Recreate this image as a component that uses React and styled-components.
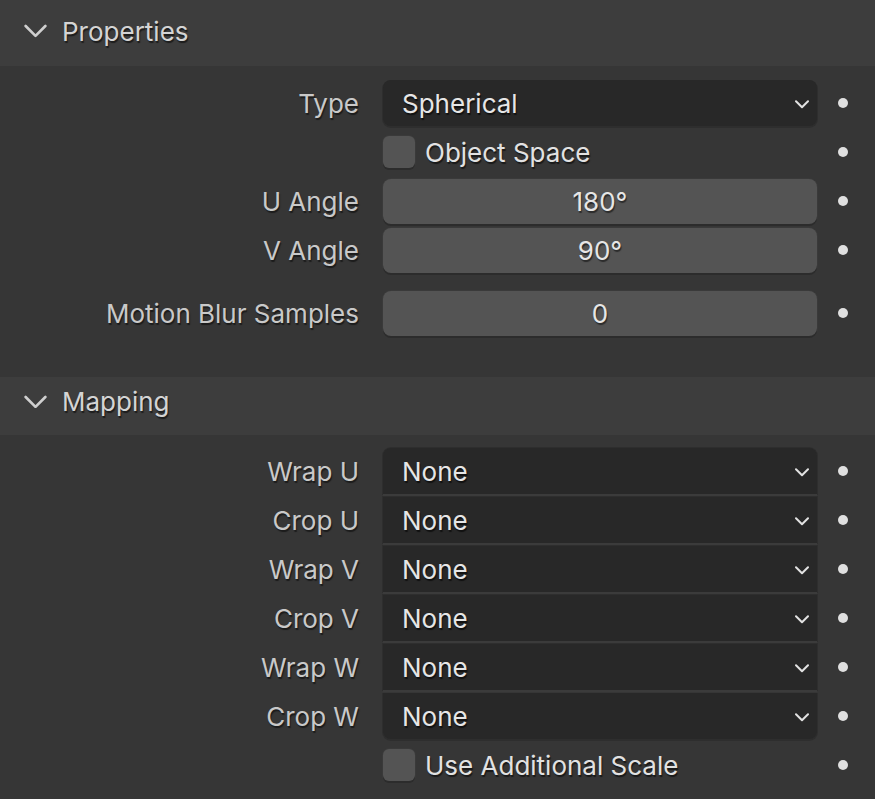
import React from "react";
import styled, { createGlobalStyle } from "styled-components";

const GlobalStyle = createGlobalStyle`
	html, body {
		margin: 0;
		padding: 0;
		background: #363636;
	}
	body {
		font-family: Inter, "Noto Sans", "DejaVu Sans", sans-serif;
		font-size: 26px;
		color: #e6e6e6;
	}
`;

const properties = [
	{ label: "Type", kind: "select", value: "Spherical" },
	{ kind: "check", value: "Object Space" },
	{ label: "U Angle", kind: "number", value: "180°" },
	{ label: "V Angle", kind: "number", value: "90°" },
	{ label: "Motion Blur Samples", kind: "number", value: "0", spaced: true },
];

const mapping = ["Wrap U", "Crop U", "Wrap V", "Crop V", "Wrap W", "Crop W"];

function Chevron({ size = 14, stroke = "#e2e2e2", width = 2 }) {
	return (
		<svg width={size} height={size * 0.6} viewBox="0 0 14 8" fill="none">
			<path
				d="M1 1 L7 7 L13 1"
				stroke={stroke}
				strokeWidth={width}
				strokeLinecap="round"
				strokeLinejoin="round"
			/>
		</svg>
	);
}

function Row({ label, spaced, children }) {
	return (
		<RowGrid $spaced={spaced}>
			<Label>{label}</Label>
			{children}
			<DotCell>
				<Dot />
			</DotCell>
		</RowGrid>
	);
}

export default function App() {
	return (
		<>
			<GlobalStyle />
			<Panel>
				<Header $height={66} $pad={4}>
					<Chevron size={23} stroke="#cfcfcf" width={1.6} />
					<HeaderTitle>Properties</HeaderTitle>
				</Header>
				<Body $top={14} $bottom={41}>
					{properties.map((p, i) => {
						if (p.kind === "check") {
							return (
								<Row key={i}>
									<CheckWrap>
										<CheckBox />
										<CheckText>{p.value}</CheckText>
									</CheckWrap>
								</Row>
							);
						}
						if (p.kind === "select") {
							return (
								<Row key={i} label={p.label}>
									<Select $pos="single">
										<span>{p.value}</span>
										<Chevron />
									</Select>
								</Row>
							);
						}
						return (
							<Row key={i} label={p.label} spaced={p.spaced}>
								<NumberField>{p.value}</NumberField>
							</Row>
						);
					})}
				</Body>
			</Panel>
			<Panel>
				<Header $height={58} $pad={9}>
					<Chevron size={23} stroke="#cfcfcf" width={1.6} />
					<HeaderTitle>Mapping</HeaderTitle>
				</Header>
				<Body $top={13} $bottom={12}>
					{mapping.map((m, i) => (
						<Row key={m} label={m}>
							<Select
								$pos={i === 0 ? "first" : i === mapping.length - 1 ? "last" : "middle"}
							>
								<span>None</span>
								<Chevron />
							</Select>
						</Row>
					))}
					<Row>
						<CheckWrap>
							<CheckBox />
							<CheckText>Use Additional Scale</CheckText>
						</CheckWrap>
					</Row>
				</Body>
			</Panel>
		</>
	);
}

const Panel = styled.section`
	display: flex;
	flex-direction: column;
`;

const Header = styled.header`
	height: ${(p) => p.$height}px;
	background: #3d3d3d;
	display: flex;
	align-items: center;
	gap: 15px;
	padding: 0 0 ${(p) => p.$pad}px 24px;
	box-sizing: border-box;
`;

const HeaderTitle = styled.h2`
	margin: 0;
	font-size: 26px;
	font-weight: 400;
	color: #d4d4d4;
	text-shadow: 1px 2px 1px rgba(0, 0, 0, 0.55);
`;

const Body = styled.div`
	background: #363636;
	padding: ${(p) => p.$top}px 0 ${(p) => p.$bottom}px;
	display: flex;
	flex-direction: column;
	gap: 3px;
`;

const RowGrid = styled.div`
	display: grid;
	grid-template-columns: 383px 434px 52px;
	height: 46px;
	align-items: center;
	margin-top: ${(p) => (p.$spaced ? 14 : 0)}px;
`;

const Label = styled.span`
	padding-right: 24px;
	text-align: right;
	color: #c9c9c9;
	text-shadow: 1px 2px 1px rgba(0, 0, 0, 0.5);
	white-space: nowrap;
`;

const radiusFor = {
	single: "8px",
	first: "8px 8px 0 0",
	middle: "0",
	last: "0 0 8px 8px",
};

const Select = styled.div`
	height: 46px;
	box-sizing: border-box;
	background: #282828;
	border-radius: ${(p) => radiusFor[p.$pos]};
	display: flex;
	align-items: center;
	justify-content: space-between;
	padding: 0 8px 0 19px;
	color: #e6e6e6;
	text-shadow: 1px 2px 1px rgba(0, 0, 0, 0.6);
	box-shadow: ${(p) =>
		p.$pos === "first" || p.$pos === "middle"
			? "0 2px 0 #3b3b3b, 0 0 0 1px #2e2e2e"
			: "0 1px 0 1px #2e2e2e"};

	svg {
		margin-top: 3px;
	}
`;

const NumberField = styled.div`
	height: 45px;
	box-sizing: border-box;
	background: #545454;
	border-radius: 8px;
	display: flex;
	align-items: center;
	justify-content: center;
	color: #e6e6e6;
	text-shadow: 1px 2px 1px rgba(0, 0, 0, 0.5);
	box-shadow: 0 2px 0 #2c2c2c, 0 0 0 1px #3a3a3a;
`;

const CheckWrap = styled.label`
	display: flex;
	align-items: center;
	gap: 10px;
	color: #e2e2e2;
	text-shadow: 1px 2px 1px rgba(0, 0, 0, 0.55);
`;

const CheckBox = styled.span`
	width: 32px;
	height: 32px;
	border-radius: 6px;
	background: #545454;
	box-shadow: 0 2px 0 #2c2c2c, 0 0 0 1px #3a3a3a;
	flex-shrink: 0;
`;

const CheckText = styled.span`
	white-space: nowrap;
`;

const DotCell = styled.div`
	display: flex;
	justify-content: center;
	align-items: center;
`;

const Dot = styled.span`
	width: 10px;
	height: 10px;
	border-radius: 50%;
	background: #e0e0e0;
`;
